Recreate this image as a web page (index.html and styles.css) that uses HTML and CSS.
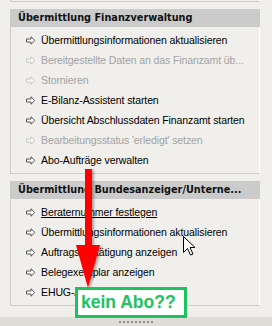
FILE: index.html
```html
<!DOCTYPE html>
<html lang="de">
	<head>
		<meta charset="UTF-8">
		<title>Übermittlung</title>
		<link rel="stylesheet" href="styles.css">
	</head>
	<body>
		<div class="frame">
			<div class="tail"></div>

			<div class="box">
				<h3>Übermittlung Finanzverwaltung</h3>
				<ul class="tasks">
					<li><i class="ico"></i>Übermittlungsinformationen aktualisieren</li>
					<li class="off"><i class="ico"></i>Bereitgestellte Daten an das Finanzamt üb...</li>
					<li class="off"><i class="ico"></i>Stornieren</li>
					<li><i class="ico"></i>E-Bilanz-Assistent starten</li>
					<li><i class="ico"></i>Übersicht Abschlussdaten Finanzamt starten</li>
					<li class="off"><i class="ico"></i>Bearbeitungsstatus 'erledigt' setzen</li>
					<li><i class="ico"></i>Abo-Aufträge verwalten</li>
				</ul>
			</div>

			<div class="box">
				<h3>Übermittlung Bundesanzeiger/Unterne...</h3>
				<ul class="tasks">
					<li class="hover"><i class="ico"></i>Beraternummer festlegen</li>
					<li><i class="ico"></i>Übermittlungsinformationen aktualisieren</li>
					<li><i class="ico"></i>Auftragsbestätigung anzeigen</li>
					<li><i class="ico"></i>Belegexemplar anzeigen</li>
					<li><i class="ico"></i>EHUG-Aufträge anzeigen</li>
				</ul>
			</div>

			<div class="splitter"><span class="grip"></span></div>

			<!-- annotation over the screenshot -->
			<div class="red-arrow">
				<div class="shaft"></div>
				<div class="head"></div>
			</div>
			<div class="note">kein Abo??</div>

			<svg class="cursor" width="13" height="20" viewBox="0 0 13 20">
				<path d="M0.5 0.5 V16.5 L4.5 12.5 L7.5 19 L10 18 L7 11.5 H12 Z" fill="#fff" stroke="#000" stroke-width="1"/>
			</svg>
		</div>

		<script>
			// draw the little outlined arrow in front of each task
			var icons = document.getElementsByClassName('ico');
			for (var i = 0; i < icons.length; i++) {
				icons[i].innerHTML = '<svg width="11" height="9" viewBox="0 0 11 9"><path d="M1.5 3 H6 V0.8 L9.8 4.5 L6 8.2 V6 H1.5 Z" fill="#fff" stroke="currentColor" stroke-width="1"/></svg>';
			}
		</script>
	</body>
</html>
```

FILE: styles.css
```css
* {
	margin: 0;
	padding: 0;
	list-style: none;
	box-sizing: border-box;
}

body {
	width: 272px;
	height: 326px;
	overflow: hidden;
	background: #f0efeb;
	font-family: "Liberation Sans", Arial, sans-serif;
	font-size: 10.5px;
	color: #000;
}

.frame {
	position: relative;
	height: 326px;
	display: flex;
	flex-direction: column;
}

.tail {
	margin-left: 10px;
	width: 250px;
	height: 2px;
	border: 1px solid #fff;
	border-top: 0;
	border-left-color: #cfcdc8;
	border-bottom-color: #cfcdc8;
}

.box {
	margin: 7px 0 0 10px;
	width: 250px;
}

.box h3 {
	height: 18px;
	line-height: 18px;
	padding-left: 8px;
	background: #cbcbcb;
	font-family: "DejaVu Sans Condensed", "DejaVu Sans", sans-serif;
	font-stretch: condensed;
	font-size: 10.8px;
	font-weight: bold;
	color: #111;
	white-space: nowrap;
	overflow: hidden;
}

.tasks {
	padding: 3px 0 3px 14px;
	border: 1px solid #fff;
	border-top: 0;
	border-left-color: #cfcdc8;
	border-bottom-color: #cfcdc8;
}

.tasks li {
	height: 20px;
	display: flex;
	align-items: center;
	white-space: nowrap;
	letter-spacing: -0.1px;
	color: #000;
}

.tasks li .ico {
	display: flex;
	width: 16px;
	color: #555;
}

.tasks li.off {
	color: #a3a3a3;
}

.tasks li.off .ico {
	color: #c2c2c2;
}

.tasks li.hover {
	text-decoration: underline;
}

.splitter {
	margin-top: auto;
	height: 9px;
	background: #dddcd7;
	display: flex;
	justify-content: center;
	align-items: center;
}

.grip {
	width: 34px;
	height: 2px;
	background: repeating-linear-gradient(90deg, #8c8c8c 0 2px, transparent 2px 4px);
}

.red-arrow {
	position: absolute;
	left: 76px;
	top: 169px;
	width: 24px;
	display: flex;
	flex-direction: column;
	align-items: center;
	filter: drop-shadow(2px 1px 1px rgba(0, 0, 0, 0.3));
}

.red-arrow .shaft {
	width: 7px;
	height: 76px;
	background: #ff0000;
}

.red-arrow .head {
	width: 0;
	height: 0;
	border-left: 12px solid transparent;
	border-right: 12px solid transparent;
	border-top: 43px solid #ff0000;
}

.note {
	position: absolute;
	left: 75px;
	top: 287px;
	width: 112px;
	height: 31px;
	border: 3px solid #1cc35f;
	background: #fff;
	color: #1cc35f;
	font-family: "Liberation Sans", Arial, sans-serif;
	font-size: 17.5px;
	font-weight: bold;
	line-height: 25px;
	padding-left: 3px;
}

.cursor {
	position: absolute;
	left: 183px;
	top: 236px;
}
```
